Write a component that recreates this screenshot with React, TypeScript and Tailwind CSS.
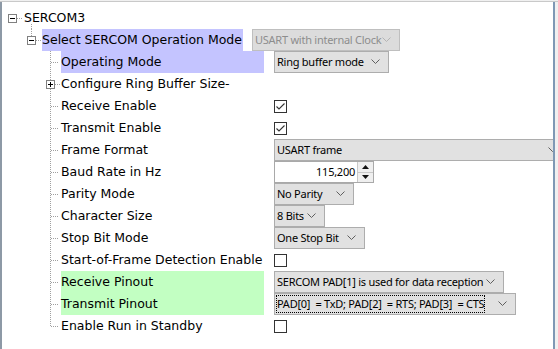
import React from "react";

type Kind = "root" | "group" | "child";

interface Row {
    label: string;
    kind: Kind;
    expander?: "minus" | "plus";
    last?: boolean;
    highlight?: "blue" | "green";
    value?: React.ReactNode;
}

const labelFont = { fontFamily: '"DejaVu Sans", Verdana, sans-serif' };
const comboFont = { fontFamily: '"Noto Sans", "Open Sans", sans-serif', letterSpacing: "-0.25px" };

function Chevron({ color = "#5f5f5f" }: { color?: string }) {
    return (
        <svg width="9" height="6" viewBox="0 0 9 6" className="shrink-0">
            <path d="M0.5 0.5 L4.5 4.5 L8.5 0.5" fill="none" stroke={color} strokeWidth="1" />
        </svg>
    );
}

function Combo({ text, width, disabled, focus }: { text: string; width: string; disabled?: boolean; focus?: boolean }) {
    return (
        <div
            className={`flex h-[22px] shrink-0 items-center justify-between border pl-[1px] pr-[8px] text-[11px] ${width} ${disabled ? "border-[#bfbfbf] bg-[#dcdcdc] text-[#8d8d8d]" : "border-[#adadad] bg-[#e1e1e1] text-black"}`}
            style={comboFont}
        >
            <span className={`whitespace-pre leading-[16px] ${focus ? "border border-dotted border-black" : "border border-transparent"}`}>{text}</span>
            <Chevron color={disabled ? "#b4b4b4" : "#5f5f5f"} />
        </div>
    );
}

function Check({ checked }: { checked?: boolean }) {
    return (
        <div className="flex h-[13px] w-[13px] items-center justify-center border border-[#333333] bg-white">
            {checked && (
                <svg width="11" height="11" viewBox="0 0 11 11">
                    <path d="M1.5 5.5 L4 8 L9.5 2.5" fill="none" stroke="#333333" strokeWidth="1.1" />
                </svg>
            )}
        </div>
    );
}

function Spinner() {
    return (
        <div className="flex h-[22px] w-[100px] border border-[#a9a9a9] bg-white">
            <div className="flex flex-1 items-center justify-end pr-[2px] text-[11px] text-black" style={comboFont}>
                115,200
            </div>
            <div className="flex w-[16px] flex-col border-l border-[#c8c8c8]">
                <div className="flex flex-1 items-center justify-center border-b border-[#c8c8c8] bg-[#efefef]">
                    <svg width="7" height="4" viewBox="0 0 7 4"><path d="M0 4 L3.5 0 L7 4 Z" fill="#111" /></svg>
                </div>
                <div className="flex flex-1 items-center justify-center bg-[#efefef]">
                    <svg width="7" height="4" viewBox="0 0 7 4"><path d="M0 0 L3.5 4 L7 0 Z" fill="#111" /></svg>
                </div>
            </div>
        </div>
    );
}

function ExpanderBox({ x, y, plus }: { x: number; y: number; plus?: boolean }) {
    return (
        <g>
            <rect x={x + 0.5} y={y + 0.5} width="8" height="8" fill="white" stroke="#808080" />
            <line x1={x + 2} y1={y + 4.5} x2={x + 7} y2={y + 4.5} stroke="#000" />
            {plus && <line x1={x + 4.5} y1={y + 2} x2={x + 4.5} y2={y + 7} stroke="#000" />}
        </g>
    );
}

const dot = { stroke: "#a0a0a0", strokeWidth: 1, strokeDasharray: "1 1" };

// coordinates below are page x; the 2px left frame is skipped by the viewBox offset
function Gutter({ row }: { row: Row }) {
    if (row.kind === "root") {
        return (
            <svg width="22" height="22" viewBox="2 0 22 22" className="shrink-0 overflow-visible">
                <ExpanderBox x={8} y={7} />
                <line x1="17" y1="11.5" x2="23" y2="11.5" {...dot} />
                <line x1="31.5" y1="17" x2="31.5" y2="22" {...dot} />
            </svg>
        );
    }
    if (row.kind === "group") {
        return (
            <svg width="40" height="22" viewBox="2 0 40 22" className="shrink-0">
                <line x1="31.5" y1="0" x2="31.5" y2="7" {...dot} />
                <ExpanderBox x={27} y={7} />
                <line x1="36" y1="11.5" x2="41" y2="11.5" {...dot} />
            </svg>
        );
    }
    return (
        <svg width="59" height="22" viewBox="2 0 59 22" className="shrink-0">
            {row.expander === "plus" ? (
                <>
                    <line x1="50.5" y1="0" x2="50.5" y2="22" {...dot} />
                    <ExpanderBox x={46} y={7} plus />
                    <line x1="55" y1="11.5" x2="60" y2="11.5" {...dot} />
                </>
            ) : (
                <>
                    <line x1="50.5" y1="0" x2="50.5" y2={row.last ? 12 : 22} {...dot} />
                    <line x1="51" y1="11.5" x2="59" y2="11.5" {...dot} />
                </>
            )}
        </svg>
    );
}

const rows: Row[] = [
    { label: "SERCOM3", kind: "root" },
    { label: "Select SERCOM Operation Mode", kind: "group", highlight: "blue", value: <Combo text="USART with internal Clock" width="w-[148px]" disabled /> },
    { label: "Operating Mode", kind: "child", highlight: "blue", value: <Combo text="Ring buffer mode" width="w-[115px]" /> },
    { label: "Configure Ring Buffer Size-", kind: "child", expander: "plus" },
    { label: "Receive Enable", kind: "child", value: <Check checked /> },
    { label: "Transmit Enable", kind: "child", value: <Check checked /> },
    { label: "Frame Format", kind: "child", value: <Combo text="USART frame" width="w-[292px]" /> },
    { label: "Baud Rate in Hz", kind: "child", value: <Spinner /> },
    { label: "Parity Mode", kind: "child", value: <Combo text="No Parity" width="w-[80px]" /> },
    { label: "Character Size", kind: "child", value: <Combo text="8 Bits" width="w-[51px]" /> },
    { label: "Stop Bit Mode", kind: "child", value: <Combo text="One Stop Bit" width="w-[91px]" /> },
    { label: "Start-of-Frame Detection Enable", kind: "child", value: <Check /> },
    { label: "Receive Pinout", kind: "child", highlight: "green", value: <Combo text="SERCOM PAD[1] is used for data reception" width="w-[230px]" /> },
    { label: "Transmit Pinout", kind: "child", highlight: "green", value: <Combo text="PAD[0]  = TxD; PAD[2]  = RTS; PAD[3]  = CTS" width="w-[242px]" focus /> },
    { label: "Enable Run in Standby", kind: "child", last: true, value: <Check /> },
];

function TreeRow({ row }: { row: Row }) {
    const bg = row.highlight === "blue" ? "bg-[#c4c4ff]" : row.highlight === "green" ? "bg-[#c2ffc2]" : "";
    const labelWidth = row.kind === "group" ? "w-[201px]" : row.kind === "child" ? "w-[203px]" : "";
    const gap = row.kind === "group" ? "mr-[9px]" : "mr-[10px]";
    return (
        <div className="flex h-[22px] items-center">
            <Gutter row={row} />
            <div className={`flex h-[22px] shrink-0 items-center whitespace-nowrap text-[12.5px] text-black ${labelWidth} ${gap} ${bg}`} style={labelFont}>
                {row.label}
            </div>
            {row.value && <div className="flex items-center">{row.value}</div>}
        </div>
    );
}

export default function App() {
    return (
        <div className="flex h-[349px] w-[558px] flex-col overflow-hidden bg-[#f0f0f0]">
            <div className="h-[2px] shrink-0 border-b border-[#c9c9c9] bg-[#f0f0f0]" />
            <div className="flex min-h-0 flex-1">
                <div className="w-[2px] shrink-0 bg-[#8d99a6]" />
                <div className="w-[551px] shrink-0 overflow-hidden bg-white pt-[5px]">
                    {rows.map((row) => (
                        <TreeRow key={row.label} row={row} />
                    ))}
                </div>
                <div className="w-[2px] shrink-0 bg-[#7f98b5]" />
                <div className="flex-1 bg-[#f0f0f0]" />
            </div>
        </div>
    );
}
